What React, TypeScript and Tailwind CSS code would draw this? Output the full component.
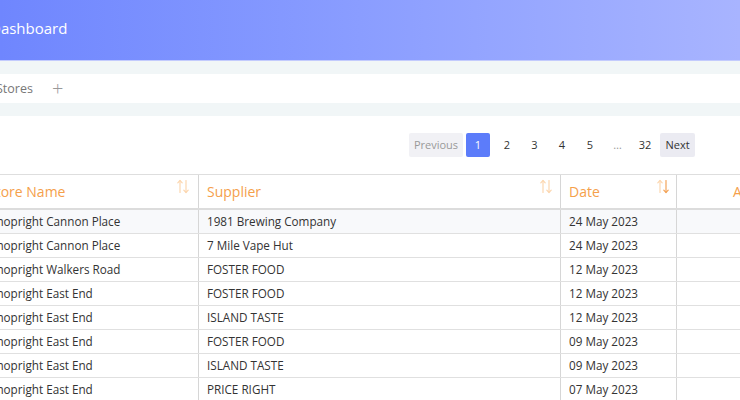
import React from "react";

const ROWS = [
  ["Shopright Cannon Place", "1981 Brewing Company", "24 May 2023"],
  ["Shopright Cannon Place", "7 Mile Vape Hut", "24 May 2023"],
  ["Shopright Walkers Road", "FOSTER FOOD", "12 May 2023"],
  ["Shopright East End", "FOSTER FOOD", "12 May 2023"],
  ["Shopright East End", "ISLAND TASTE", "12 May 2023"],
  ["Shopright East End", "FOSTER FOOD", "09 May 2023"],
  ["Shopright East End", "ISLAND TASTE", "09 May 2023"],
  ["Shopright East End", "PRICE RIGHT", "07 May 2023"],
];

function SortIcon({ active = false }: { active?: boolean }) {
  return (
    <svg width="12" height="15" viewBox="0 0 12 15" fill="none" strokeWidth="1.2" strokeLinecap="round" strokeLinejoin="round">
      <g stroke="#fcd7b0">
        <path d="M3 13.5V1.5" />
        <path d="M0.8 3.8L3 1.5L5.2 3.8" />
      </g>
      <g stroke={active ? "#f3a45a" : "#fcd7b0"}>
        <path d="M9 1.5V13.5" />
        <path d="M6.8 11.2L9 13.5L11.2 11.2" />
      </g>
    </svg>
  );
}

export default function App() {
  return (
    <div className="w-[740px] h-[400px] overflow-hidden bg-white" style={{ fontFamily: "'Open Sans', sans-serif" }}>
      {/* Header */}
      <div className="h-[61px] bg-gradient-to-r from-[#6f86fe] to-[#a8b4ff] border-b border-[#c3cbfd] flex items-center">
        <span className="-ml-[10px] text-white text-[15px] -mt-[4px]">Dashboard</span>
      </div>

      {/* Tabs */}
      <div className="bg-[#f1f6f7] pt-[13px] pb-[13px]">
        <div className="bg-white h-[29px] flex items-center pt-[2px]">
          <span className="-ml-[4px] text-[12.5px] text-[#777]">Stores</span>
          <span className="ml-[19px] text-[#999] text-[20px] font-light leading-none -mt-[2px]">+</span>
        </div>
      </div>

      {/* Pagination */}
      <div className="flex justify-end items-center pr-[45px] mt-[17px] text-[11px]">
        <div className="flex items-center">
          <span className="h-[24px] w-[54px] flex items-center justify-center bg-[#f1f1f5] text-[#999] rounded-[2px]">Previous</span>
          <span className="ml-[3px] h-[24px] w-[24px] flex items-center justify-center bg-[#5c7cfa] text-white rounded-[2px]">1</span>
          <span className="w-[28px] ml-[3px] text-center text-[#333]">2</span>
          <span className="w-[27px] text-center text-[#333]">3</span>
          <span className="w-[28px] text-center text-[#333]">4</span>
          <span className="w-[28px] text-center text-[#333]">5</span>
          <span className="w-[27px] text-center text-[#999]">…</span>
          <span className="w-[28px] text-center text-[#333]">32</span>
          <span className="ml-[1px] h-[24px] w-[35px] flex items-center justify-center bg-[#ebebf2] text-[#333] rounded-[2px]">Next</span>
        </div>
      </div>

      {/* Table */}
      <div className="mt-[17px] -ml-[17px] w-[820px] border-t border-[#dedede]">
        <div className="flex h-[35px] border-b-2 border-[#dcdcdc] text-[14px] text-[#f5a04b]">
          <div className="w-[216px] pl-[5px] pr-[9px] flex items-center justify-between border-r border-[#d6d6d6]">
            <span>Store Name</span>
            <span className="-mt-[10px]"><SortIcon /></span>
          </div>
          <div className="w-[362px] pl-[8px] pr-[8px] flex items-center justify-between border-r border-[#d6d6d6]">
            <span>Supplier</span>
            <span className="-mt-[10px]"><SortIcon /></span>
          </div>
          <div className="w-[116px] pl-[8px] pr-[7px] flex items-center justify-between border-r border-[#d6d6d6]">
            <span>Date</span>
            <span className="-mt-[10px]"><SortIcon active /></span>
          </div>
          <div className="flex-1 pl-[56px] flex items-center">
            <span>Amount</span>
          </div>
        </div>
        {ROWS.map((r, i) => (
          <div
            key={i}
            className={`flex h-[24px] border-b border-[#e0e0e0] text-[11.7px] text-[#333] ${i === 0 ? "bg-[#f8f9fb]" : "bg-white"}`}
          >
            <div className="w-[216px] pl-[7px] flex items-center border-r border-[#d6d6d6]">{r[0]}</div>
            <div className="w-[362px] pl-[8px] flex items-center border-r border-[#d6d6d6]">{r[1]}</div>
            <div className="w-[116px] pl-[8px] flex items-center border-r border-[#d6d6d6]">{r[2]}</div>
            <div className="flex-1" />
          </div>
        ))}
      </div>
    </div>
  );
}
